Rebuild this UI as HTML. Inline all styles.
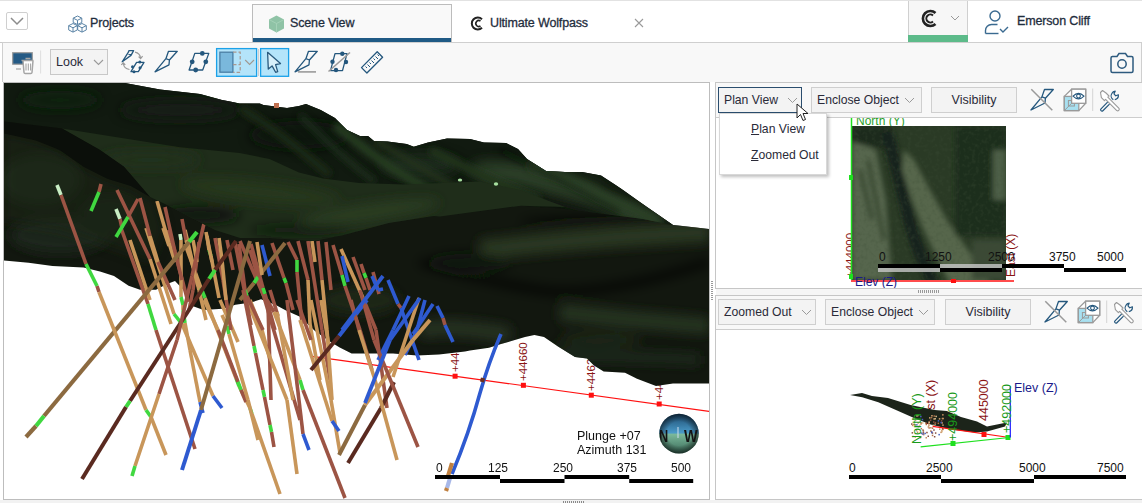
<!DOCTYPE html>
<html><head><meta charset="utf-8">
<style>
*{box-sizing:border-box;margin:0;padding:0}
html,body{width:1142px;height:503px;overflow:hidden;background:#fff;font-family:"Liberation Sans",sans-serif;color:#333}
.abs{position:absolute}
#top{position:absolute;left:0;top:0;width:1142px;height:43px;background:#fff;border-top:1px solid #e2e2e2;border-bottom:1px solid #c9c9c9}
.tabtxt{position:absolute;font-size:12.5px;color:#1f2d3d;top:15px;letter-spacing:-0.15px;-webkit-text-stroke:0.3px #1f2d3d}
#tb{position:absolute;left:2px;top:42px;width:1140px;height:40px;background:#f8f8f8;border:1px solid #cfcfcf;border-bottom:none}
#vp{position:absolute;left:3px;top:82px;width:707px;height:418px;border:1px solid #bdbdbd;background:#fff;overflow:hidden}
.sel{position:absolute;background:#f3f3f3;border:1px solid #cfcfcf;font-size:12.2px;color:#2a2a38}
.btn{position:absolute;background:#f3f3f3;border:1px solid #cfcfcf;font-size:12.5px;color:#2a2a38;text-align:center}
.chev{position:absolute;width:7px;height:7px;border-right:1px solid #9a9a9a;border-bottom:1px solid #9a9a9a;transform:rotate(45deg)}
</style></head><body>
<div id="top">
  <!-- dropdown toggle -->
  <div class="abs" style="left:6px;top:11px;width:22px;height:18px;border:1px solid #cfcfcf;border-radius:2px;background:#fff"></div>
  <svg class="abs" style="left:9px;top:15px" width="16" height="10"><polyline points="2,2 8,8 14,2" fill="none" stroke="#8c8c8c" stroke-width="1.5"/></svg>
  <!-- projects -->
  <svg class="abs" style="left:67.5px;top:14px" width="19" height="19" viewBox="0 0 19 19"><path d="M9.50 1.00 L13.80 3.15 L13.80 7.45 L9.50 9.60 L5.20 7.45 L5.20 3.15Z M5.20 3.15 L9.50 5.30 L13.80 3.15 M9.50 5.30 L9.50 9.60 M5.00 8.50 L9.30 10.65 L9.30 14.95 L5.00 17.10 L0.70 14.95 L0.70 10.65Z M0.70 10.65 L5.00 12.80 L9.30 10.65 M5.00 12.80 L5.00 17.10 M14.00 8.50 L18.30 10.65 L18.30 14.95 L14.00 17.10 L9.70 14.95 L9.70 10.65Z M9.70 10.65 L14.00 12.80 L18.30 10.65 M14.00 12.80 L14.00 17.10" fill="#fff" stroke="#5b84a6" stroke-width="1" stroke-linejoin="round"/></svg>
  <div class="tabtxt" style="left:90px">Projects</div>
  <!-- scene view tab -->
  <div class="abs" style="left:252px;top:3px;width:200px;height:39px;background:#f9f9f9;border:1px solid #bcbcbc;border-bottom:none"></div>
  <div class="abs" style="left:253px;top:37px;width:198px;height:4px;background:#1f5a85"></div>
  <svg class="abs" style="left:268px;top:14px" width="17" height="18" viewBox="0 0 17 18"><path d="M8.5 0.5L16 4.5v9L8.5 17.5 1 13.5v-9z" fill="#8fc3a6"/><path d="M1 4.5l7.5 4 7.5-4M8.5 8.5v9" stroke="#a9d4bb" stroke-width="0.8" fill="none"/></svg>
  <div class="tabtxt" style="left:290px">Scene View</div>
  <!-- ultimate wolfpass -->
  <svg class="abs" style="left:470px;top:15px" width="15" height="15" viewBox="0 0 15 15"><path d="M12 3.2A6 6 0 1 0 12 11.8" fill="none" stroke="#222" stroke-width="2"/><path d="M10.5 5A3 3 0 1 0 10.5 10" fill="none" stroke="#222" stroke-width="1.6"/></svg>
  <div class="tabtxt" style="left:490px">Ultimate Wolfpass</div>
  <svg class="abs" style="left:634px;top:17px" width="10" height="10"><path d="M1 1L9 9M9 1L1 9" stroke="#9a9a9a" stroke-width="1.1"/></svg>
  <!-- logo box -->
  <div class="abs" style="left:908px;top:0px;width:60px;height:42px;background:#f7f7f7;border-left:1px solid #d0d0d0;border-right:1px solid #d0d0d0"></div>
  <div class="abs" style="left:908px;top:34px;width:60px;height:8px;background:#5dbb8a"></div>
  <svg class="abs" style="left:920px;top:8px" width="19" height="19" viewBox="0 0 19 19"><path d="M15.5 4A7.5 7.5 0 1 0 15.5 15" fill="none" stroke="#222" stroke-width="2.6"/><path d="M13 6.5A4 4 0 1 0 13 12.5" fill="none" stroke="#222" stroke-width="2"/></svg>
  <svg class="abs" style="left:950px;top:14px" width="10" height="7"><polyline points="1,1 5,5 9,1" fill="none" stroke="#9a9a9a" stroke-width="1"/></svg>
  <!-- user -->
  <svg class="abs" style="left:984px;top:8px" width="26" height="26" viewBox="0 0 26 26" fill="none" stroke="#3a6a90" stroke-width="1.4"><circle cx="11" cy="7" r="5"/><path d="M1.5 24.5v-3a6 6 0 0 1 6-6h6"/><path d="M1.5 24.5h13"/><path d="M16 20l3 3 5-5"/></svg>
  <div class="tabtxt" style="left:1017px;top:13px">Emerson Cliff</div>
</div>
<div id="tb"></div>
<svg class="abs" style="left:0;top:42px" width="1142" height="40" viewBox="0 42 1142 40">
 <!-- monitor trash -->
 <rect x="12.7" y="52.7" width="19.6" height="11.5" fill="#245a85" stroke="#9a9a9a" stroke-width="1.2"/>
 <line x1="16" y1="69" x2="21" y2="69" stroke="#aaa" stroke-width="1.3"/>
 <path d="M21.5 60.5h12 M23 60.8l1 11.7a1.2 1.2 0 0 0 1.2 1h5.6a1.2 1.2 0 0 0 1.2-1l1-11.7 M25.5 58.5h5" fill="#fff" stroke="#a5a5a5" stroke-width="1.5"/>
 <path d="M26 63.5v7 M28.3 63.5v7 M30.6 63.5v7" stroke="#a5a5a5" stroke-width="1.1"/>
 <line x1="40.6" y1="50.5" x2="40.6" y2="73.5" stroke="#dedede" stroke-width="1"/>
 <!-- Look select -->
 <rect x="50.5" y="49.5" width="57" height="25" fill="#f3f3f3" stroke="#c8c8c8"/>
 <polyline points="94,60 98.5,64.5 103,60" fill="none" stroke="#9a9a9a" stroke-width="1.1"/>
 <g fill="none" stroke="#24577d" stroke-width="1.3" stroke-linejoin="round">
  <!-- rotate icon -->
  <path d="M129 50.6h4.6l-2.6 4.8-8.8 6.4 6.2-9.6z M127.5 53.3l3.6 1.6"/>
  <path d="M131 71.7l5.6-9.4h7.4l-5.7 9.4z"/>
  <!-- knife -->
  <path d="M168.5 51.3h8.8l-7.9 8.7-0.4 4.8-14 7 10.9-13.1z M165.9 58.7l3.5 1.3"/>
  <!-- parallelogram -->
  <path d="M194.8 53.4h14l-6.1 16.6h-13.6z"/>
  <!-- knife w/ line -->
  <path d="M308.5 51.3h8.8l-7.9 8.7-0.4 4.8-14 7 10.9-13.1z M305.9 58.7l3.5 1.3"/>
  <!-- slashed polygon -->
  <path d="M335 53.6h12l-4.5 17h-12z" />
  <!-- ruler -->
  <path d="M361.5 67.6l15.7-15.8 5.4 5.4-15.7 15.8z"/>
  <path d="M365.5 66.5l1.5 1.5 M367.5 64.5l2.5 2.5 M369.5 62.5l1.5 1.5 M371.5 60.5l2.5 2.5 M373.5 58.5l1.5 1.5 M375.5 56.5l2.5 2.5 M377.5 54.5l1.5 1.5" stroke-width="1"/>
 </g>
 <g fill="none" stroke="#9a9a9a" stroke-width="1.2">
  <path d="M135 52.2a7 7 0 0 1 5.6 6 M138.6 56.6l2 2 2-2.4"/>
  <path d="M129.5 69.5a7 7 0 0 1-6.2-6.2 M121.3 64.8l2-2 2 2"/>
  <line x1="298" y1="71.9" x2="316" y2="71.9" stroke-width="1.6"/>
 </g>
 <g fill="#24577d">
  <circle cx="132.5" cy="66.8" r="1.5"/><circle cx="139.8" cy="62.1" r="1.5"/><circle cx="140" cy="67.7" r="1.5"/><circle cx="134" cy="71.7" r="1.5"/>
  <circle cx="202.3" cy="53.4" r="2.4"/><circle cx="192.2" cy="61.8" r="2.4"/><circle cx="205.8" cy="61.8" r="2.4"/><circle cx="195.7" cy="70" r="2.4"/>
  <circle cx="342.3" cy="53.8" r="2.2"/><circle cx="332.5" cy="61.7" r="2.2"/><circle cx="346" cy="62" r="2.2"/><circle cx="336" cy="70" r="2.2"/>
 </g>
 <line x1="328.5" y1="71.5" x2="350" y2="52.5" stroke="#9a9a9a" stroke-width="1.6"/>
 <!-- selected buttons -->
 <rect x="216.6" y="48.6" width="40" height="27.7" fill="#b4e4fa" stroke="#1ba1e8" stroke-width="1.3"/>
 <rect x="219.9" y="52.2" width="13" height="20" fill="#7ab8dc" stroke="#4a7ea4" stroke-width="1.3"/>
 <path d="M233 52.2h7.2v20.2h-7.2 M233 64.6h7.2" fill="none" stroke="#a89890" stroke-width="1.2" stroke-dasharray="3.5 2"/>
 <polyline points="245.2,60 249.6,64.4 254,60" fill="none" stroke="#a09890" stroke-width="1.1"/>
 <line x1="258.5" y1="49" x2="258.5" y2="76" stroke="#d0d0d0" stroke-width="1"/>
 <rect x="260.6" y="48.6" width="28" height="27.7" fill="#b4e4fa" stroke="#1ba1e8" stroke-width="1.3"/>
 <path d="M267.6 52.3l12.9 11.2-4.9 1.1 2.1 7-2.1.7-3.5-6.4-3.8 3.2z" fill="#d8f0fa" stroke="#2a5a7e" stroke-width="1.3" stroke-linejoin="round"/>
 <!-- camera -->
 <path d="M1112 56.5h5l2-3h6.5l2 3h4a1.5 1.5 0 0 1 1.5 1.5v13a1.5 1.5 0 0 1-1.5 1.5h-19a1.5 1.5 0 0 1-1.5-1.5v-13a1.5 1.5 0 0 1 1.5-1.5z" fill="none" stroke="#2d5a7e" stroke-width="1.5"/>
 <circle cx="1122" cy="64" r="4.2" fill="none" stroke="#2d5a7e" stroke-width="1.5"/>
</svg>
<div class="abs" style="left:56px;top:54.5px;font-size:12.5px;color:#2a2a3a">Look</div>

<div id="vp"></div>
<svg class="abs" style="left:0;top:0" width="1142" height="503" viewBox="0 0 1142 503"><defs><clipPath id="vpc"><rect x="4" y="83" width="705" height="416"/></clipPath></defs><g clip-path="url(#vpc)">
<line x1="312" y1="356.4" x2="712" y2="411.7" stroke="#ff1010" stroke-width="1.2"/>
<rect x="452.6" y="373.7" width="5" height="5" fill="#ff1010"/>
<rect x="520.9" y="382.8" width="5" height="5" fill="#ff1010"/>
<rect x="588.8" y="392.7" width="5" height="5" fill="#ff1010"/>
<rect x="656.7" y="401.5" width="5" height="5" fill="#ff1010"/>
<text x="459" y="372" transform="rotate(-90 459 372)" font-family="Liberation Sans" font-size="11.5" fill="#8a1414">+44700</text>
<text x="526.5" y="381" transform="rotate(-90 526.5 381)" font-family="Liberation Sans" font-size="11.5" fill="#8a1414">+44660</text>
<text x="595" y="391" transform="rotate(-90 595 391)" font-family="Liberation Sans" font-size="11.5" fill="#8a1414">+44620</text>
<text x="663" y="400" transform="rotate(-90 663 400)" font-family="Liberation Sans" font-size="11.5" fill="#8a1414">+44580</text>
<defs><filter id="b6" x="-50%" y="-50%" width="200%" height="200%"><feGaussianBlur stdDeviation="6"/></filter><filter id="b3" x="-50%" y="-50%" width="200%" height="200%"><feGaussianBlur stdDeviation="3"/></filter>
<clipPath id="tclip"><polygon points="4,83 125,83 160,89.5 200,94 222,100 230,101.5 239.5,103.4 259.8,103.4 263.4,105 287,108 299,106 306,104 320.7,110 335,118 347,130 360,136 368,136 374,141 387.5,141.6 406.6,144 413.8,146.8 428,142.5 447,138.5 470,139 484,142.5 506,143 518,149 527,159 546,171 565,172 582,172 601,175.5 615.6,185 623,190 637,200 646.6,206.7 673,225 709,229 709,383.5 673,383.5 656,386 637,378.8 625,372.8 603.7,371.6 594,365.6 587,358.5 575,357 558,346.5 544,337 534.4,335 525,337 501,344 489,347.7 470,350.6 465,351.6 439,354.5 417,355.5 393,353.6 351.6,353.6 339.7,347.6 329.8,341.6 315,331 300,316.8 286,310.4 276.7,305.6 261,299.3 251,302.5 235.4,304.8 222.7,308.8 203.6,310 191,305.6 184.5,291 175,281 167,284 156,289.7 140,289.7 128.6,285.8 114,276 100,271.5 83.5,267.6 52.5,266 28.6,262.8 4,260.4"/></clipPath><clipPath id="sclip"><polygon points="4,83 125,83 160,89.5 200,94 222,100 230,101.5 239.5,103.4 259.8,103.4 263.4,105 287,108 299,106 306,104 320.7,110 335,118 347,130 360,136 368,136 374,141 387.5,141.6 406.6,144 413.8,146.8 428,142.5 447,138.5 470,139 484,142.5 506,143 518,149 527,159 546,171 565,172 582,172 601,175.5 615.6,185 623,190 637,200 646.6,206.7 673,225 709,229 709,229 669.8,224.6 642.8,219 602,213.8 561.7,208.4 521,205.7 480.5,211 440,216.5 433.5,216 388.8,223 344,235 314,241 269.5,238 240,238 215,230 190,217 165,204 150,197 124,166.8 100,150 62,128.6 4.3,121.5"/></clipPath><clipPath id="mclip"><polygon points="62,128.6 180,147.3 239.6,153 269.5,159 299,172.6 323,178.6 359,183 403.7,184.6 480,181.6 520,190 565,207 521,205.7 480.5,211 440,216.5 433.5,216 388.8,223 344,235 314,241 269.5,238 240,238 215,230 190,217 165,204 150,197 124,166.8 100,150"/></clipPath></defs>
<polygon points="4,83 125,83 160,89.5 200,94 222,100 230,101.5 239.5,103.4 259.8,103.4 263.4,105 287,108 299,106 306,104 320.7,110 335,118 347,130 360,136 368,136 374,141 387.5,141.6 406.6,144 413.8,146.8 428,142.5 447,138.5 470,139 484,142.5 506,143 518,149 527,159 546,171 565,172 582,172 601,175.5 615.6,185 623,190 637,200 646.6,206.7 673,225 709,229 709,383.5 673,383.5 656,386 637,378.8 625,372.8 603.7,371.6 594,365.6 587,358.5 575,357 558,346.5 544,337 534.4,335 525,337 501,344 489,347.7 470,350.6 465,351.6 439,354.5 417,355.5 393,353.6 351.6,353.6 339.7,347.6 329.8,341.6 315,331 300,316.8 286,310.4 276.7,305.6 261,299.3 251,302.5 235.4,304.8 222.7,308.8 203.6,310 191,305.6 184.5,291 175,281 167,284 156,289.7 140,289.7 128.6,285.8 114,276 100,271.5 83.5,267.6 52.5,266 28.6,262.8 4,260.4" fill="#12170f"/>
<g clip-path="url(#tclip)" filter="url(#b6)"><path d="M480,250 C560,240 650,235 709,232" stroke="#2a3823" stroke-width="20" fill="none"/><path d="M560,312 C610,318 660,322 709,326" stroke="#283420" stroke-width="16" fill="none"/><path d="M520,350 C580,360 640,355 700,360" stroke="#1f2a1b" stroke-width="10" fill="none"/><path d="M420,330 C450,325 480,330 510,335" stroke="#263320" stroke-width="16" fill="none"/><path d="M420,262 C480,280 540,292 563,292 C620,290 670,275 709,262" stroke="#080a07" stroke-width="6" fill="none"/><ellipse cx="600" cy="340" rx="40" ry="8" fill="#1c2519"/><ellipse cx="470" cy="262" rx="40" ry="8" fill="#10150e"/><ellipse cx="360" cy="300" rx="40" ry="15" fill="#1c2618"/><ellipse cx="600" cy="222" rx="80" ry="4" fill="#0c0f0a"/><ellipse cx="40" cy="180" rx="40" ry="25" fill="#1a2a1a"/><ellipse cx="60" cy="235" rx="50" ry="18" fill="#1a281a"/><ellipse cx="110" cy="215" rx="30" ry="20" fill="#152015"/></g>
<polygon points="4,133 36,140 60,150 84,167 107,179 131,186 155,200 165,230 150,262 120,250 60,230 4,222" fill="#1a2819" opacity="0.6" filter="url(#b6)"/>
<g stroke-linecap="butt"><line x1="121" y1="228" x2="148" y2="304" stroke="#9c5444" stroke-width="3.6"/><line x1="148" y1="304" x2="156" y2="330" stroke="#40d840" stroke-width="3.6"/><line x1="156" y1="330" x2="195" y2="449" stroke="#9c5444" stroke-width="3.6"/><line x1="116" y1="209" x2="120" y2="219" stroke="#c8eec4" stroke-width="3.6"/><line x1="120" y1="219" x2="122" y2="228" stroke="#9c5444" stroke-width="3.6"/><line x1="117" y1="190" x2="150" y2="259" stroke="#9c5444" stroke-width="3.6"/><line x1="150" y1="259" x2="171" y2="324" stroke="#c8965a" stroke-width="3.6"/><line x1="146" y1="228" x2="174" y2="314" stroke="#c8965a" stroke-width="3.6"/><line x1="174" y1="314" x2="182" y2="324" stroke="#40d840" stroke-width="3.6"/><line x1="182" y1="324" x2="213" y2="396" stroke="#c8965a" stroke-width="3.6"/><line x1="213" y1="396" x2="222" y2="408" stroke="#2e5ad0" stroke-width="3.6"/><line x1="168" y1="230" x2="175" y2="252" stroke="#9c5444" stroke-width="3.6"/><line x1="175" y1="252" x2="188" y2="302" stroke="#9c5444" stroke-width="3.6"/><line x1="185" y1="230" x2="199" y2="290" stroke="#c8965a" stroke-width="3.6"/><line x1="199" y1="290" x2="206" y2="320" stroke="#c8965a" stroke-width="3.6"/><line x1="180" y1="234" x2="181" y2="240" stroke="#c8eec4" stroke-width="3.6"/><line x1="181" y1="240" x2="181" y2="297" stroke="#c8965a" stroke-width="3.6"/><line x1="181" y1="297" x2="183" y2="305" stroke="#40d840" stroke-width="3.6"/><line x1="183" y1="305" x2="183" y2="310" stroke="#c8965a" stroke-width="3.6"/><line x1="183" y1="310" x2="185" y2="323" stroke="#40d840" stroke-width="3.6"/><line x1="185" y1="323" x2="190" y2="350" stroke="#c8965a" stroke-width="3.6"/><line x1="190" y1="350" x2="200" y2="402" stroke="#c8965a" stroke-width="3.6"/><line x1="200" y1="402" x2="203" y2="413" stroke="#2e5ad0" stroke-width="3.6"/><line x1="185" y1="244" x2="201" y2="288" stroke="#c8965a" stroke-width="3.6"/><line x1="201" y1="288" x2="205" y2="298" stroke="#40d840" stroke-width="3.6"/><line x1="205" y1="298" x2="236" y2="378" stroke="#c8965a" stroke-width="3.6"/><line x1="236" y1="378" x2="239" y2="386" stroke="#40d840" stroke-width="3.6"/><line x1="239" y1="386" x2="250" y2="408" stroke="#c8965a" stroke-width="3.6"/><line x1="250" y1="408" x2="252" y2="414" stroke="#40d840" stroke-width="3.6"/><line x1="252" y1="414" x2="280" y2="494" stroke="#c8965a" stroke-width="3.6"/><line x1="204" y1="300" x2="218" y2="330" stroke="#c8965a" stroke-width="3.6"/><line x1="218" y1="330" x2="238" y2="382" stroke="#9c5444" stroke-width="3.6"/><line x1="238" y1="382" x2="241" y2="390" stroke="#40d840" stroke-width="3.6"/><line x1="241" y1="390" x2="246" y2="402" stroke="#9c5444" stroke-width="3.6"/><line x1="222" y1="315" x2="227" y2="326" stroke="#c8965a" stroke-width="3.6"/><line x1="227" y1="326" x2="229" y2="334" stroke="#40d840" stroke-width="3.6"/><line x1="229" y1="334" x2="248" y2="400" stroke="#c8965a" stroke-width="3.6"/><line x1="248" y1="400" x2="258" y2="440" stroke="#c8965a" stroke-width="3.6"/><line x1="220" y1="300" x2="238" y2="342" stroke="#c8965a" stroke-width="3.6"/><line x1="250" y1="250" x2="262" y2="291" stroke="#9c5444" stroke-width="3.6"/><line x1="262" y1="291" x2="264" y2="297" stroke="#40d840" stroke-width="3.6"/><line x1="264" y1="297" x2="300" y2="420" stroke="#9c5444" stroke-width="3.6"/><line x1="250" y1="300" x2="262" y2="330" stroke="#c8965a" stroke-width="3.6"/><line x1="262" y1="330" x2="270" y2="360" stroke="#c8965a" stroke-width="3.6"/><line x1="270" y1="290" x2="278" y2="316" stroke="#9c5444" stroke-width="3.6"/><line x1="262" y1="245" x2="270" y2="276" stroke="#2e5ad0" stroke-width="3.6"/><line x1="272" y1="243" x2="284" y2="278" stroke="#9c5444" stroke-width="3.6"/><line x1="284" y1="278" x2="286" y2="283" stroke="#40d840" stroke-width="3.6"/><line x1="286" y1="283" x2="293" y2="310" stroke="#9c5444" stroke-width="3.6"/><line x1="288" y1="242" x2="297" y2="260" stroke="#9c5444" stroke-width="3.6"/><line x1="297" y1="260" x2="297" y2="272" stroke="#40d840" stroke-width="3.6"/><line x1="297" y1="272" x2="302" y2="324" stroke="#9c5444" stroke-width="3.6"/><line x1="298" y1="241" x2="308" y2="280" stroke="#9c5444" stroke-width="3.6"/><line x1="308" y1="280" x2="310" y2="324" stroke="#c8965a" stroke-width="3.6"/><line x1="310" y1="324" x2="320" y2="380" stroke="#c8965a" stroke-width="3.6"/><line x1="308" y1="241" x2="322" y2="330" stroke="#9c5444" stroke-width="3.6"/><line x1="322" y1="330" x2="330" y2="380" stroke="#9c5444" stroke-width="3.6"/><line x1="318" y1="241" x2="322" y2="280" stroke="#9c5444" stroke-width="3.6"/><line x1="322" y1="280" x2="327" y2="330" stroke="#c8965a" stroke-width="3.6"/><line x1="327" y1="330" x2="332" y2="400" stroke="#c8965a" stroke-width="3.6"/><line x1="240" y1="241" x2="268" y2="306" stroke="#9c5444" stroke-width="3.6"/><line x1="268" y1="306" x2="271" y2="400" stroke="#9c5444" stroke-width="3.6"/><line x1="243" y1="290" x2="254" y2="346" stroke="#9c5444" stroke-width="3.6"/><line x1="254" y1="346" x2="255.5" y2="353" stroke="#40d840" stroke-width="3.6"/><line x1="255.5" y1="353" x2="263" y2="390" stroke="#9c5444" stroke-width="3.6"/><line x1="263" y1="390" x2="264.5" y2="397" stroke="#40d840" stroke-width="3.6"/><line x1="264.5" y1="397" x2="270" y2="425" stroke="#9c5444" stroke-width="3.6"/><line x1="270" y1="425" x2="271.5" y2="432" stroke="#40d840" stroke-width="3.6"/><line x1="271.5" y1="432" x2="274" y2="447" stroke="#9c5444" stroke-width="3.6"/><line x1="247" y1="300" x2="287" y2="400" stroke="#c8965a" stroke-width="3.6"/><line x1="287" y1="400" x2="297" y2="474" stroke="#c8965a" stroke-width="3.6"/><line x1="277" y1="312" x2="293" y2="400" stroke="#c8965a" stroke-width="3.6"/><line x1="267" y1="300" x2="274" y2="312" stroke="#9c5444" stroke-width="3.6"/><line x1="274" y1="312" x2="300" y2="380" stroke="#c8965a" stroke-width="3.6"/><line x1="300" y1="380" x2="303" y2="390" stroke="#40d840" stroke-width="3.6"/><line x1="303" y1="390" x2="345" y2="498" stroke="#9c5444" stroke-width="3.6"/><line x1="287" y1="300" x2="303" y2="434" stroke="#9c5444" stroke-width="3.6"/><line x1="303" y1="434" x2="309" y2="450" stroke="#2e5ad0" stroke-width="3.6"/><line x1="297" y1="300" x2="311" y2="340" stroke="#9c5444" stroke-width="3.6"/><line x1="311" y1="300" x2="331" y2="400" stroke="#c8965a" stroke-width="3.6"/><line x1="331" y1="400" x2="340" y2="453" stroke="#c8965a" stroke-width="3.6"/><line x1="321" y1="300" x2="329" y2="346" stroke="#c8965a" stroke-width="3.6"/><line x1="300" y1="320" x2="332" y2="421" stroke="#c8965a" stroke-width="3.6"/><line x1="332" y1="421" x2="339" y2="431" stroke="#2e5ad0" stroke-width="3.6"/><line x1="285" y1="243" x2="258" y2="277" stroke="#8c6a40" stroke-width="4"/><line x1="258" y1="277" x2="254" y2="283" stroke="#40d840" stroke-width="4"/><line x1="254" y1="283" x2="240" y2="300" stroke="#8c6a40" stroke-width="4"/><line x1="130" y1="240" x2="150" y2="300" stroke="#c8965a" stroke-width="3.6"/><line x1="138" y1="199" x2="128" y2="217" stroke="#9c5444" stroke-width="3.6"/><line x1="128" y1="217" x2="116" y2="237" stroke="#40d840" stroke-width="3.6"/><line x1="101" y1="184" x2="99" y2="192" stroke="#9c5444" stroke-width="3.6"/><line x1="99" y1="192" x2="91" y2="211" stroke="#40d840" stroke-width="3.6"/><line x1="333" y1="245" x2="342" y2="275" stroke="#9c5444" stroke-width="3.6"/><line x1="342" y1="275" x2="345" y2="286" stroke="#40d840" stroke-width="3.6"/><line x1="345" y1="286" x2="360" y2="330" stroke="#9c5444" stroke-width="3.6"/><line x1="360" y1="330" x2="372" y2="370" stroke="#9c5444" stroke-width="3.6"/><line x1="341" y1="249" x2="363" y2="298" stroke="#c8965a" stroke-width="3.6"/><line x1="363" y1="298" x2="376" y2="330" stroke="#9c5444" stroke-width="3.6"/><line x1="376" y1="330" x2="387" y2="408" stroke="#9c5444" stroke-width="3.6"/><line x1="342" y1="256" x2="348" y2="282" stroke="#2e5ad0" stroke-width="3.6"/><line x1="353" y1="257" x2="365" y2="290" stroke="#9c5444" stroke-width="3.6"/><line x1="361" y1="264" x2="364" y2="273" stroke="#9c5444" stroke-width="3.6"/><line x1="364" y1="273" x2="366" y2="278" stroke="#40d840" stroke-width="3.6"/><line x1="366" y1="278" x2="370" y2="290" stroke="#9c5444" stroke-width="3.6"/><line x1="373" y1="272" x2="379" y2="294" stroke="#9c5444" stroke-width="3.6"/><line x1="372" y1="276" x2="378" y2="290" stroke="#2e5ad0" stroke-width="3.6"/><line x1="378" y1="290" x2="383" y2="289" stroke="#2e5ad0" stroke-width="3.6"/><line x1="388" y1="280" x2="398" y2="304" stroke="#2e5ad0" stroke-width="3.6"/><line x1="398" y1="304" x2="401" y2="308" stroke="#9c5444" stroke-width="3.6"/><line x1="401" y1="308" x2="419" y2="360" stroke="#2e5ad0" stroke-width="3.6"/><line x1="409" y1="296" x2="393" y2="330" stroke="#2e5ad0" stroke-width="3.6"/><line x1="393" y1="330" x2="378" y2="360" stroke="#2e5ad0" stroke-width="3.6"/><line x1="419" y1="298" x2="393" y2="377" stroke="#c8965a" stroke-width="3.6"/><line x1="425" y1="300" x2="417" y2="330" stroke="#2e5ad0" stroke-width="3.6"/><line x1="417" y1="330" x2="405" y2="355" stroke="#2e5ad0" stroke-width="3.6"/><line x1="433" y1="304" x2="413" y2="334" stroke="#2e5ad0" stroke-width="3.6"/><line x1="437" y1="306" x2="443" y2="318" stroke="#2e5ad0" stroke-width="3.6"/><line x1="443" y1="318" x2="445" y2="325" stroke="#9c5444" stroke-width="3.6"/><line x1="445" y1="325" x2="453" y2="342" stroke="#2e5ad0" stroke-width="3.6"/><line x1="163" y1="228" x2="169" y2="246" stroke="#c8965a" stroke-width="3.6"/><line x1="199" y1="242" x2="193" y2="290" stroke="#9c5444" stroke-width="3.6"/><line x1="193" y1="290" x2="189" y2="310" stroke="#9c5444" stroke-width="3.6"/><line x1="215" y1="238" x2="223" y2="280" stroke="#9c5444" stroke-width="3.6"/><line x1="223" y1="280" x2="231" y2="330" stroke="#9c5444" stroke-width="3.6"/><line x1="219" y1="238" x2="222" y2="260" stroke="#c8965a" stroke-width="3.6"/><line x1="222" y1="260" x2="226" y2="300" stroke="#c8965a" stroke-width="3.6"/><line x1="207" y1="236" x2="209" y2="250" stroke="#c8965a" stroke-width="3.6"/><line x1="209" y1="250" x2="211" y2="256" stroke="#40d840" stroke-width="3.6"/><line x1="211" y1="256" x2="219" y2="298" stroke="#c8965a" stroke-width="3.6"/><line x1="239" y1="244" x2="245" y2="290" stroke="#9c5444" stroke-width="3.6"/><line x1="245" y1="290" x2="247" y2="296" stroke="#40d840" stroke-width="3.6"/><line x1="247" y1="296" x2="263" y2="330" stroke="#9c5444" stroke-width="3.6"/><line x1="235" y1="242" x2="251" y2="325" stroke="#9c5444" stroke-width="3.6"/><line x1="251" y1="244" x2="263" y2="288" stroke="#9c5444" stroke-width="3.6"/><line x1="263" y1="288" x2="265" y2="294" stroke="#40d840" stroke-width="3.6"/><line x1="265" y1="294" x2="275" y2="330" stroke="#9c5444" stroke-width="3.6"/><line x1="193" y1="240" x2="197" y2="262" stroke="#c8965a" stroke-width="3.6"/><line x1="227" y1="240" x2="233" y2="270" stroke="#9c5444" stroke-width="3.6"/><line x1="257" y1="242" x2="262" y2="275" stroke="#c8965a" stroke-width="3.6"/><line x1="312" y1="241" x2="315" y2="262" stroke="#c8965a" stroke-width="3.6"/><line x1="326" y1="242" x2="331" y2="290" stroke="#9c5444" stroke-width="3.6"/><line x1="140" y1="198" x2="150" y2="236" stroke="#9c5444" stroke-width="3.6"/><line x1="150" y1="236" x2="158" y2="262" stroke="#c8965a" stroke-width="3.6"/><line x1="158" y1="262" x2="175" y2="300" stroke="#9c5444" stroke-width="3.6"/><line x1="157" y1="201" x2="169" y2="243" stroke="#c8965a" stroke-width="3.6"/><line x1="169" y1="243" x2="175" y2="262" stroke="#c8965a" stroke-width="3.6"/><line x1="165" y1="207" x2="175" y2="252" stroke="#9c5444" stroke-width="3.6"/><line x1="175" y1="252" x2="182" y2="280" stroke="#9c5444" stroke-width="3.6"/><line x1="182" y1="219" x2="186" y2="240" stroke="#9c5444" stroke-width="3.6"/><line x1="186" y1="240" x2="198" y2="286" stroke="#c8965a" stroke-width="3.6"/><line x1="206" y1="232" x2="212" y2="262" stroke="#c8965a" stroke-width="3.6"/><line x1="197" y1="232" x2="189" y2="242" stroke="#40d840" stroke-width="4.2"/><line x1="189" y1="242" x2="44" y2="416" stroke="#8c6a40" stroke-width="4.2"/><line x1="44" y1="416" x2="36" y2="426" stroke="#40d840" stroke-width="4.2"/><line x1="36" y1="426" x2="26" y2="437" stroke="#8c6a40" stroke-width="4.2"/><line x1="57" y1="185" x2="61" y2="195" stroke="#c8eec4" stroke-width="3.6"/><line x1="61" y1="195" x2="86" y2="264" stroke="#9c5444" stroke-width="3.6"/><line x1="86" y1="264" x2="97" y2="286" stroke="#40d840" stroke-width="3.6"/><line x1="97" y1="286" x2="99" y2="292" stroke="#9c5444" stroke-width="3.6"/><line x1="99" y1="292" x2="146" y2="410" stroke="#c8965a" stroke-width="3.6"/><line x1="146" y1="410" x2="151" y2="417" stroke="#40d840" stroke-width="3.6"/><line x1="151" y1="417" x2="166" y2="455" stroke="#c8965a" stroke-width="3.6"/><line x1="236" y1="241" x2="215" y2="270" stroke="#5a2a20" stroke-width="4"/><line x1="215" y1="270" x2="209" y2="279" stroke="#40d840" stroke-width="4"/><line x1="209" y1="279" x2="130" y2="401" stroke="#5a2a20" stroke-width="4"/><line x1="130" y1="401" x2="126" y2="407" stroke="#40d840" stroke-width="4"/><line x1="126" y1="407" x2="82" y2="479" stroke="#5a2a20" stroke-width="4"/><line x1="208" y1="206" x2="192" y2="276" stroke="#9c5444" stroke-width="3.6"/><line x1="192" y1="276" x2="177" y2="340" stroke="#9c5444" stroke-width="3.6"/><line x1="177" y1="340" x2="159" y2="394" stroke="#9c5444" stroke-width="3.6"/><line x1="159" y1="394" x2="135" y2="466" stroke="#c8965a" stroke-width="3.6"/><line x1="135" y1="466" x2="132" y2="476" stroke="#40d840" stroke-width="3.6"/><line x1="250" y1="241" x2="201" y2="410" stroke="#8c6a40" stroke-width="4"/><line x1="201" y1="410" x2="182" y2="470" stroke="#2e5ad0" stroke-width="4"/><line x1="430" y1="320" x2="413" y2="340" stroke="#c8965a" stroke-width="4"/><line x1="413" y1="340" x2="365" y2="405" stroke="#c8965a" stroke-width="4"/><line x1="365" y1="405" x2="339" y2="455" stroke="#8c6a40" stroke-width="4"/><line x1="367" y1="300" x2="339" y2="336" stroke="#2e5ad0" stroke-width="4"/><line x1="339" y1="336" x2="311" y2="370" stroke="#5a2a20" stroke-width="4"/><line x1="394" y1="382" x2="381" y2="408" stroke="#5a2a20" stroke-width="4"/><line x1="381" y1="408" x2="348" y2="463" stroke="#5a2a20" stroke-width="4"/><line x1="351" y1="300" x2="359" y2="330" stroke="#9c5444" stroke-width="3.6"/><line x1="359" y1="330" x2="375" y2="380" stroke="#c8965a" stroke-width="3.6"/><line x1="375" y1="380" x2="397" y2="460" stroke="#c8965a" stroke-width="3.6"/><line x1="360" y1="290" x2="374" y2="340" stroke="#9c5444" stroke-width="3.6"/><line x1="374" y1="340" x2="418" y2="447" stroke="#9c5444" stroke-width="3.6"/><line x1="420" y1="298" x2="390" y2="340" stroke="#2e5ad0" stroke-width="3.8"/><line x1="390" y1="340" x2="365" y2="403" stroke="#2e5ad0" stroke-width="3.8"/><line x1="383" y1="276" x2="342" y2="330" stroke="#2e5ad0" stroke-width="3.8"/></g>
<polygon points="4,83 125,83 160,89.5 200,94 222,100 230,101.5 239.5,103.4 259.8,103.4 263.4,105 287,108 299,106 306,104 320.7,110 335,118 347,130 360,136 368,136 374,141 387.5,141.6 406.6,144 413.8,146.8 428,142.5 447,138.5 470,139 484,142.5 506,143 518,149 527,159 546,171 565,172 582,172 601,175.5 615.6,185 623,190 637,200 646.6,206.7 673,225 709,229 709,229 669.8,224.6 642.8,219 602,213.8 561.7,208.4 521,205.7 480.5,211 440,216.5 433.5,216 388.8,223 344,235 314,241 269.5,238 240,238 215,230 190,217 165,204 150,197 124,166.8 100,150 62,128.6 4.3,121.5" fill="#111a10"/>
<g clip-path="url(#sclip)" filter="url(#b6)"><ellipse cx="60" cy="100" rx="40" ry="9" fill="#0c2410"/><ellipse cx="180" cy="110" rx="60" ry="10" fill="#141e12"/><ellipse cx="540" cy="178" rx="70" ry="16" fill="#2a3c25" transform="rotate(12 520 175)"/><ellipse cx="620" cy="205" rx="50" ry="11" fill="#2a3c25" transform="rotate(20 610 200)"/><ellipse cx="420" cy="165" rx="40" ry="12" fill="#1e2c1a"/><ellipse cx="300" cy="135" rx="50" ry="14" fill="#0c120a"/><ellipse cx="560" cy="200" rx="60" ry="4" fill="#080c07" transform="rotate(15 560 200)"/></g>
<g clip-path="url(#sclip)" filter="url(#b3)"><path d="M335,125 C360,145 390,170 430,190" stroke="#283c22" stroke-width="9" fill="none"/><path d="M375,140 C400,155 430,175 470,195" stroke="#22331d" stroke-width="7" fill="none"/><path d="M300,115 C320,135 345,160 375,182" stroke="#1e2d1a" stroke-width="6" fill="none"/><path d="M430,150 C460,165 500,185 540,200" stroke="#24361f" stroke-width="8" fill="none"/><path d="M530,165 C570,180 610,200 660,222" stroke="#2c4025" stroke-width="9" fill="none"/><path d="M500,150 C540,170 580,190 620,212" stroke="#0e150c" stroke-width="3" fill="none"/><path d="M240,108 C270,125 300,150 330,175" stroke="#1c2a18" stroke-width="8" fill="none"/></g>
<polygon points="62,128.6 180,147.3 239.6,153 269.5,159 299,172.6 323,178.6 359,183 403.7,184.6 480,181.6 520,190 565,207 521,205.7 480.5,211 440,216.5 433.5,216 388.8,223 344,235 314,241 269.5,238 240,238 215,230 190,217 165,204 150,197 124,166.8 100,150" fill="#1f2d1a"/>
<g clip-path="url(#mclip)" filter="url(#b6)"><ellipse cx="260" cy="192" rx="80" ry="10" fill="#27381f" transform="rotate(6 260 192)"/><ellipse cx="370" cy="212" rx="70" ry="8" fill="#2a3c22" transform="rotate(-8 370 212)"/><ellipse cx="200" cy="215" rx="40" ry="8" fill="#0e150c"/><ellipse cx="300" cy="230" rx="50" ry="4" fill="#10170e"/><ellipse cx="150" cy="160" rx="50" ry="8" fill="#24321e"/></g>
<polygon points="4.3,121.5 23.9,123.9 47.7,126.7 62,128.6 100,150 124,166.8 150,197 131,186 107.4,178.8 83.5,166.8 59.7,150 35.8,140.6 4.3,133.4" fill="#0b0f0a"/>
<ellipse cx="460" cy="180" rx="2.2" ry="1.6" fill="#a8e0a0"/><ellipse cx="496" cy="184" rx="2.2" ry="1.8" fill="#a8e0a0"/>
<rect x="274" y="103" width="5" height="5" fill="#c07050"/>
<path d="M501,334 C494,350 486,372 480,393 C474,415 462,450 452,474" fill="none" stroke="#2e5ad0" stroke-width="3.6"/>
<path d="M452,463 L448,476" stroke="#c08040" stroke-width="4.2"/>
<path d="M450,478 L447,488" stroke="#a8b8e8" stroke-width="4.2"/>
<path d="M447,488 L446,491" stroke="#c08040" stroke-width="4.2"/>
<line x1="483" y1="378" x2="482" y2="382" stroke="#6a3020" stroke-width="4.2"/>
<text x="577" y="440" font-family="Liberation Sans" font-size="12.5" fill="#111">Plunge +07</text>
<text x="577" y="454" font-family="Liberation Sans" font-size="12.5" fill="#111">Azimuth 131</text>
<g fill="#000"><rect x="435" y="475" width="65" height="4"/><rect x="500" y="479" width="64.5" height="4"/><rect x="564.5" y="475" width="64.7" height="4"/><rect x="629.2" y="479" width="64" height="4"/></g>
<g font-family="Liberation Sans" font-size="12" fill="#111"><text x="436" y="472">0</text><text x="488" y="472">125</text><text x="553" y="472">250</text><text x="617" y="472">375</text><text x="671" y="472">500</text></g>
<defs><linearGradient id="sph" x1="0" y1="0" x2="0" y2="1"><stop offset="0" stop-color="#1c4a6e"/><stop offset="0.48" stop-color="#4a9ac8"/><stop offset="0.52" stop-color="#7ab89a"/><stop offset="1" stop-color="#3a6a58"/></linearGradient><radialGradient id="sphs" cx="0.5" cy="0.5" r="0.5"><stop offset="0.6" stop-color="#000" stop-opacity="0"/><stop offset="1" stop-color="#000" stop-opacity="0.55"/></radialGradient></defs>
<circle cx="679" cy="433.6" r="19.8" fill="url(#sph)"/><circle cx="679" cy="433.6" r="19.8" fill="url(#sphs)"/>
<clipPath id="sphc"><circle cx="679" cy="433.6" r="19.5"/></clipPath><g clip-path="url(#sphc)" font-family="Liberation Sans" font-weight="bold" font-size="17" fill="#141414"><text x="0" y="0" transform="translate(659 441.5) scale(0.75 1)">N</text><text x="0" y="0" transform="translate(684 441.5) scale(0.85 1)">W</text></g>
<line x1="678" y1="427" x2="678" y2="438" stroke="#cde" stroke-width="1"/>
</g></svg>
<!-- splitter -->
<div class="abs" style="left:710px;top:82px;width:5px;height:418px;background:#fff"></div>
<div class="abs" style="left:0;top:500px;width:1142px;height:3px;background:#f2f2f2"></div>
<div class="abs" style="left:563px;top:501px;width:22px;height:2px;background:repeating-linear-gradient(90deg,#8a8a8a 0 1px,transparent 1px 2px)"></div>
<div class="abs" style="left:711px;top:281px;width:2px;height:20px;background:repeating-linear-gradient(#9a9a9a 0 1px,transparent 1px 2px)"></div>
<!-- top right panel -->
<div class="abs" style="left:715px;top:82px;width:427px;height:207px;border:1px solid #c6c6c6;border-right:none;background:#fff"></div>
<div class="abs" style="left:716px;top:83px;width:426px;height:35px;background:#f8f8f8;border-bottom:1px solid #cdcdcd"></div>
<div class="sel" style="left:718px;top:87px;width:84px;height:26px;border-color:#2a4d6e;background:#f3f3f3"><span class="abs" style="left:5px;top:5px">Plan View</span></div>
<svg class="abs" style="left:787px;top:97px" width="11" height="7"><polyline points="1,1 5.5,5.5 10,1" fill="none" stroke="#9a9a9a" stroke-width="1"/></svg>
<div class="sel" style="left:811px;top:87px;width:111px;height:26px"><span class="abs" style="left:5px;top:5px">Enclose Object</span></div>
<svg class="abs" style="left:904px;top:97px" width="11" height="7"><polyline points="1,1 5.5,5.5 10,1" fill="none" stroke="#9a9a9a" stroke-width="1"/></svg>
<div class="btn" style="left:931px;top:87px;width:86px;height:26px;line-height:24px">Visibility</div>
<svg class="abs" style="left:1026px;top:86px" width="100" height="28" viewBox="1026 86 100 28">
 <path d="M1044.5 89.5h8.8l-7.9 8.7-0.4 4.8-14 7 10.9-13.1z M1041.9 96.9l3.5 1.3" fill="none" stroke="#24577d" stroke-width="1.3" stroke-linejoin="round"/>
 <line x1="1031.3" y1="89.3" x2="1052.3" y2="110.3" stroke="#9a9a9a" stroke-width="1.5"/>
 <path d="M1064.3 96.4l7.3-7.2h14.1v14.1l-6.9 7.3h-14.5z" fill="#fff" stroke="#9a9a9a" stroke-width="1.3" stroke-linejoin="round"/>
 <rect x="1064.3" y="96.4" width="14.5" height="14.2" fill="#a8e0f0" stroke="#9a9a9a" stroke-width="1.3"/>
 <rect x="1068.4" y="100.5" width="6" height="5.5" fill="none" stroke="#9a9a9a" stroke-width="1"/>
 <line x1="1064.3" y1="110.6" x2="1071.6" y2="103.3" stroke="#9a9a9a" stroke-width="1"/>
 <rect x="1071.6" y="89.2" width="14.1" height="14.1" fill="#fff" stroke="#9a9a9a" stroke-width="1.3"/>
 <path d="M1073 96.1q5.5-5.5 11 0q-5.5 5.5-11 0z" fill="none" stroke="#24577d" stroke-width="1.1"/>
 <circle cx="1078.5" cy="96.1" r="1.9" fill="none" stroke="#24577d" stroke-width="1.1"/>
 <line x1="1092.7" y1="88.5" x2="1092.7" y2="111" stroke="#d4d4d4" stroke-width="1"/>
 <path d="M1100.5 92.5l2-2 3.5 2.5 3 3-1.2 1.2 11.2 11.2a1.6 1.6 0 0 1-2.2 2.2l-11.2-11.2-1.2 1.2-3-3z" fill="#fff" stroke="#9a9a9a" stroke-width="1.1" stroke-linejoin="round"/>
 <path d="M1107.6 102.2l-6.6 6.6a1.3 1.3 0 0 0 1.9 1.9l6.6-6.6" fill="none" stroke="#24577d" stroke-width="1.2"/>
 <path d="M1113.3 99.8a4.6 4.6 0 0 1-1.5-6.3a4.6 4.6 0 0 1 3.4-2.3l-1.2 2.6 1.8 2 2.6-1a4.6 4.6 0 0 1-3.6 4.9" fill="none" stroke="#24577d" stroke-width="1.2" stroke-linejoin="round"/>
</svg>
<!-- plan view content -->
<svg class="abs" style="left:716px;top:118px" width="426" height="170" viewBox="716 118 426 170">
 <defs><filter id="bl3" x="-20%" y="-20%" width="140%" height="140%"><feGaussianBlur stdDeviation="2.5"/></filter><filter id="noise" x="0" y="0" width="100%" height="100%"><feTurbulence type="fractalNoise" baseFrequency="0.25" numOctaves="2" seed="4"/><feColorMatrix type="matrix" values="0 0 0 0 0.05  0 0 0 0 0.08  0 0 0 0 0.04  0 0 0 -2.2 1.2"/></filter><clipPath id="pimg"><rect x="852" y="126" width="154" height="154"/></clipPath></defs>
 <text x="854" y="278" transform="rotate(-90 854 278)" font-family="Liberation Sans" font-size="11.5" fill="#8a1414">+444000</text>
 <text x="856" y="125" font-family="Liberation Sans" font-size="12" fill="#2aa02a">North (Y)</text>
 <g clip-path="url(#pimg)">
  <rect x="852" y="126" width="154" height="154" fill="#2a3a25"/>
  <g filter="url(#bl3)">
   <polygon points="852,140 876,150 886,200 892,280 852,280" fill="#56664e"/>
   <polygon points="852,126 892,126 882,150 852,142" fill="#1e2a1a"/>
   <path d="M887,132 C895,160 902,190 908,215 C914,240 922,262 934,284" stroke="#18231a" stroke-width="12" fill="none"/>
   <polygon points="904,150 914,160 930,190 948,222 968,250 990,284 950,284 936,256 922,226 910,195 902,170" fill="#56664c"/>
   <rect x="955" y="126" width="51" height="110" fill="#1f2d1b"/>
   <rect x="993" y="150" width="13" height="50" fill="#4e5e46"/>
   <rect x="972" y="240" width="34" height="40" fill="#3a4a34"/>
   <path d="M860,170 L872,220 M868,160 L884,240" stroke="#34442e" stroke-width="4" fill="none"/>
  </g>
  <rect x="852" y="126" width="154" height="154" filter="url(#noise)" opacity="0.35"/>
 </g>
 <line x1="851.5" y1="118" x2="851.5" y2="280" stroke="#1ee01e" stroke-width="1.5"/>
 <rect x="849" y="175" width="4" height="5" fill="#1ee01e"/><rect x="849" y="274" width="4" height="5" fill="#1ee01e"/>
 <line x1="851" y1="281" x2="1014" y2="281" stroke="#ff1010" stroke-width="1.6"/>
 <rect x="951" y="279" width="5" height="4" fill="#ff1010"/>
 <text x="1015" y="277" transform="rotate(-90 1015 277)" font-family="Liberation Sans" font-size="12" fill="#8a1414">East (X)</text>
 <text x="855" y="286" font-family="Liberation Sans" font-size="12" fill="#1a1a8a">Elev (Z)</text>
 <g fill="#000"><rect x="878" y="264" width="62" height="4"/><rect x="940" y="268" width="62" height="4"/><rect x="1002" y="264" width="62" height="4"/><rect x="1064" y="268" width="62" height="4"/></g>
 <g fill="#c8c8c8" opacity="0.8"><rect x="878" y="268" width="62" height="4"/><rect x="940" y="264" width="62" height="4"/></g>
 <g font-family="Liberation Sans" font-size="12" fill="#111"><text x="879" y="261">0</text><text x="925" y="261">1250</text><text x="988" y="261">2500</text><text x="1049" y="261">3750</text><text x="1097" y="261">5000</text></g>
</svg>
<!-- dropdown menu -->
<div class="abs" style="left:719px;top:113px;width:108px;height:62px;background:#fff;border:1px solid #d8d8d8;box-shadow:2px 2px 3px rgba(0,0,0,0.25)"></div>
<div class="abs" style="left:751px;top:122px;font-size:12.2px;color:#2a2a38"><u>P</u>lan View</div>
<div class="abs" style="left:751px;top:148px;font-size:12.2px;color:#2a2a38"><u>Z</u>oomed Out</div>
<!-- cursor -->
<svg class="abs" style="left:796px;top:103px" width="14" height="20" viewBox="0 0 14 20"><path d="M1 1L1 15L4.5 11.5L7 17.5L9.5 16.5L7 10.5L12 10.5Z" fill="#fff" stroke="#222" stroke-width="1"/></svg>
<!-- bottom splitter -->
<div class="abs" style="left:716px;top:289px;width:426px;height:6px;background:#f6f6f6"></div>
<div class="abs" style="left:918px;top:290px;width:22px;height:3px;background:repeating-linear-gradient(90deg,#9a9a9a 0 1px,transparent 1px 2px)"></div>
<!-- bottom right panel -->
<div class="abs" style="left:715px;top:295px;width:427px;height:205px;border:1px solid #c6c6c6;border-right:none;background:#fff"></div>
<div class="abs" style="left:716px;top:296px;width:426px;height:34px;background:#f8f8f8;border-bottom:1px solid #cdcdcd"></div>
<div class="sel" style="left:718px;top:299px;width:98px;height:26px"><span class="abs" style="left:5px;top:5px">Zoomed Out</span></div>
<svg class="abs" style="left:801px;top:309px" width="11" height="7"><polyline points="1,1 5.5,5.5 10,1" fill="none" stroke="#9a9a9a" stroke-width="1"/></svg>
<div class="sel" style="left:825px;top:299px;width:110px;height:26px"><span class="abs" style="left:5px;top:5px">Enclose Object</span></div>
<svg class="abs" style="left:918px;top:309px" width="11" height="7"><polyline points="1,1 5.5,5.5 10,1" fill="none" stroke="#9a9a9a" stroke-width="1"/></svg>
<div class="btn" style="left:945px;top:299px;width:86px;height:26px;line-height:24px">Visibility</div>
<svg class="abs" style="left:1039.5px;top:298px" width="100" height="28" viewBox="1026 86 100 28">
 <path d="M1044.5 89.5h8.8l-7.9 8.7-0.4 4.8-14 7 10.9-13.1z M1041.9 96.9l3.5 1.3" fill="none" stroke="#24577d" stroke-width="1.3" stroke-linejoin="round"/>
 <line x1="1031.3" y1="89.3" x2="1052.3" y2="110.3" stroke="#9a9a9a" stroke-width="1.5"/>
 <path d="M1064.3 96.4l7.3-7.2h14.1v14.1l-6.9 7.3h-14.5z" fill="#fff" stroke="#9a9a9a" stroke-width="1.3" stroke-linejoin="round"/>
 <rect x="1064.3" y="96.4" width="14.5" height="14.2" fill="#a8e0f0" stroke="#9a9a9a" stroke-width="1.3"/>
 <rect x="1068.4" y="100.5" width="6" height="5.5" fill="none" stroke="#9a9a9a" stroke-width="1"/>
 <line x1="1064.3" y1="110.6" x2="1071.6" y2="103.3" stroke="#9a9a9a" stroke-width="1"/>
 <rect x="1071.6" y="89.2" width="14.1" height="14.1" fill="#fff" stroke="#9a9a9a" stroke-width="1.3"/>
 <path d="M1073 96.1q5.5-5.5 11 0q-5.5 5.5-11 0z" fill="none" stroke="#24577d" stroke-width="1.1"/>
 <circle cx="1078.5" cy="96.1" r="1.9" fill="none" stroke="#24577d" stroke-width="1.1"/>
 <line x1="1092.7" y1="88.5" x2="1092.7" y2="111" stroke="#d4d4d4" stroke-width="1"/>
 <path d="M1100.5 92.5l2-2 3.5 2.5 3 3-1.2 1.2 11.2 11.2a1.6 1.6 0 0 1-2.2 2.2l-11.2-11.2-1.2 1.2-3-3z" fill="#fff" stroke="#9a9a9a" stroke-width="1.1" stroke-linejoin="round"/>
 <path d="M1107.6 102.2l-6.6 6.6a1.3 1.3 0 0 0 1.9 1.9l6.6-6.6" fill="none" stroke="#24577d" stroke-width="1.2"/>
 <path d="M1113.3 99.8a4.6 4.6 0 0 1-1.5-6.3a4.6 4.6 0 0 1 3.4-2.3l-1.2 2.6 1.8 2 2.6-1a4.6 4.6 0 0 1-3.6 4.9" fill="none" stroke="#24577d" stroke-width="1.2" stroke-linejoin="round"/>
</svg>
<svg class="abs" style="left:716px;top:330px" width="426" height="170" viewBox="716 330 426 170">
 <g font-family="Liberation Sans" font-size="12.5">
  <text x="988" y="421" transform="rotate(-90 988 421)" fill="#8a1414">445000</text>
  <text x="935" y="425" transform="rotate(-90 935 425)" fill="#8a1414">East (X)</text>
 </g>
 <polygon points="850,395 862,393 872,396 888,398 910.6,405 934.7,410 946.8,411 961,417 977,421.4 987,426.4 1007,422.4 1005,426.4 987,431.4 975,432.4 950.8,429.4 930.7,424.4 914.6,418.3 896.5,410.3 878.3,402.2 862.2,397.2" fill="#1c241a"/>
 <rect x="930.9" y="431.1" width="1.5" height="1.5" fill="#4a60c0"/><rect x="941.2" y="431.0" width="1.5" height="1.5" fill="#e0c090"/><rect x="911.9" y="424.7" width="1.5" height="1.5" fill="#c89060"/><rect x="931.8" y="434.7" width="1.5" height="1.5" fill="#b07048"/><rect x="922.9" y="434.0" width="1.5" height="1.5" fill="#d0a070"/><rect x="928.4" y="427.2" width="1.5" height="1.5" fill="#b07048"/><rect x="934.4" y="423.4" width="1.5" height="1.5" fill="#c89060"/><rect x="940.3" y="431.6" width="1.5" height="1.5" fill="#c89060"/><rect x="935.4" y="415.7" width="1.5" height="1.5" fill="#e0c090"/><rect x="930.8" y="416.9" width="1.5" height="1.5" fill="#b07048"/><rect x="942.1" y="414.1" width="1.5" height="1.5" fill="#c89060"/><rect x="941.7" y="417.8" width="1.5" height="1.5" fill="#c89060"/><rect x="920.3" y="436.1" width="1.5" height="1.5" fill="#e0c090"/><rect x="939.0" y="428.4" width="1.5" height="1.5" fill="#c89060"/><rect x="941.1" y="429.9" width="1.5" height="1.5" fill="#d0a070"/><rect x="920.6" y="422.3" width="1.5" height="1.5" fill="#c89060"/><rect x="940.9" y="420.1" width="1.5" height="1.5" fill="#8a5040"/><rect x="920.6" y="427.9" width="1.5" height="1.5" fill="#b07048"/><rect x="930.1" y="430.3" width="1.5" height="1.5" fill="#b07048"/><rect x="920.9" y="432.8" width="1.5" height="1.5" fill="#d0a070"/><rect x="933.3" y="418.2" width="1.5" height="1.5" fill="#d0a070"/><rect x="933.5" y="415.3" width="1.5" height="1.5" fill="#b07048"/><rect x="941.4" y="422.2" width="1.5" height="1.5" fill="#d0a070"/><rect x="911.6" y="432.1" width="1.5" height="1.5" fill="#8a5040"/><rect x="923.0" y="433.3" width="1.5" height="1.5" fill="#d0a070"/><rect x="912.5" y="418.2" width="1.5" height="1.5" fill="#c89060"/><rect x="914.8" y="419.7" width="1.5" height="1.5" fill="#d0a070"/><rect x="922.0" y="422.2" width="1.5" height="1.5" fill="#e0c090"/><rect x="919.0" y="424.6" width="1.5" height="1.5" fill="#e0c090"/><rect x="934.9" y="432.3" width="1.5" height="1.5" fill="#8a5040"/><rect x="912.2" y="435.8" width="1.5" height="1.5" fill="#b07048"/><rect x="917.7" y="425.8" width="1.5" height="1.5" fill="#8a5040"/><rect x="940.4" y="421.8" width="1.5" height="1.5" fill="#4a60c0"/><rect x="928.4" y="421.2" width="1.5" height="1.5" fill="#8a5040"/><rect x="920.8" y="432.4" width="1.5" height="1.5" fill="#4a60c0"/><rect x="915.8" y="429.9" width="1.5" height="1.5" fill="#d0a070"/><rect x="916.2" y="415.1" width="1.5" height="1.5" fill="#e0c090"/><rect x="928.1" y="423.3" width="1.5" height="1.5" fill="#c89060"/><rect x="934.7" y="421.9" width="1.5" height="1.5" fill="#8a5040"/><rect x="925.6" y="423.7" width="1.5" height="1.5" fill="#b07048"/><rect x="942.3" y="428.7" width="1.5" height="1.5" fill="#d0a070"/><rect x="921.7" y="418.8" width="1.5" height="1.5" fill="#4a60c0"/><rect x="929.0" y="417.1" width="1.5" height="1.5" fill="#d0a070"/><rect x="914.4" y="424.0" width="1.5" height="1.5" fill="#c89060"/><rect x="912.9" y="423.7" width="1.5" height="1.5" fill="#c89060"/><rect x="925.5" y="437.0" width="1.5" height="1.5" fill="#c89060"/><rect x="942.2" y="424.4" width="1.5" height="1.5" fill="#d0a070"/><rect x="933.0" y="421.3" width="1.5" height="1.5" fill="#8a5040"/><rect x="920.3" y="423.3" width="1.5" height="1.5" fill="#c89060"/><rect x="914.6" y="432.9" width="1.5" height="1.5" fill="#e0c090"/><rect x="941.7" y="428.4" width="1.5" height="1.5" fill="#d0a070"/><rect x="938.8" y="418.1" width="1.5" height="1.5" fill="#d0a070"/><rect x="919.7" y="432.0" width="1.5" height="1.5" fill="#e0c090"/><rect x="922.6" y="432.1" width="1.5" height="1.5" fill="#8a5040"/><rect x="933.2" y="429.3" width="1.5" height="1.5" fill="#8a5040"/><rect x="922.6" y="430.2" width="1.5" height="1.5" fill="#8a5040"/><rect x="937.7" y="420.1" width="1.5" height="1.5" fill="#4a60c0"/><rect x="933.9" y="436.0" width="1.5" height="1.5" fill="#8a5040"/><rect x="931.8" y="427.4" width="1.5" height="1.5" fill="#b07048"/><rect x="926.2" y="431.8" width="1.5" height="1.5" fill="#8a5040"/><rect x="932.5" y="424.6" width="1.5" height="1.5" fill="#e0c090"/><rect x="931.7" y="432.3" width="1.5" height="1.5" fill="#8a5040"/><rect x="919.8" y="421.9" width="1.5" height="1.5" fill="#d0a070"/><rect x="922.2" y="433.4" width="1.5" height="1.5" fill="#4a60c0"/><rect x="925.4" y="422.4" width="1.5" height="1.5" fill="#8a5040"/><rect x="927.6" y="426.2" width="1.5" height="1.5" fill="#c89060"/><rect x="917.4" y="422.3" width="1.5" height="1.5" fill="#d0a070"/><rect x="920.1" y="415.8" width="1.5" height="1.5" fill="#4a60c0"/><rect x="934.4" y="418.0" width="1.5" height="1.5" fill="#e0c090"/><rect x="927.5" y="435.5" width="1.5" height="1.5" fill="#8a5040"/><rect x="931.0" y="431.8" width="1.5" height="1.5" fill="#4a60c0"/><rect x="919.7" y="436.9" width="1.5" height="1.5" fill="#c89060"/><rect x="916.1" y="424.1" width="1.5" height="1.5" fill="#4a60c0"/><rect x="916.8" y="431.5" width="1.5" height="1.5" fill="#c89060"/><rect x="931.2" y="415.0" width="1.5" height="1.5" fill="#d0a070"/><rect x="942.4" y="417.8" width="1.5" height="1.5" fill="#c89060"/><rect x="914.5" y="436.3" width="1.5" height="1.5" fill="#d0a070"/><rect x="917.2" y="414.8" width="1.5" height="1.5" fill="#d0a070"/><rect x="922.2" y="429.2" width="1.5" height="1.5" fill="#b07048"/><rect x="929.9" y="419.5" width="1.5" height="1.5" fill="#8a5040"/><rect x="911.0" y="423.3" width="1.5" height="1.5" fill="#8a5040"/><rect x="938.4" y="433.9" width="1.5" height="1.5" fill="#4a60c0"/><rect x="937.6" y="422.6" width="1.5" height="1.5" fill="#b07048"/><rect x="928.6" y="420.9" width="1.5" height="1.5" fill="#8a5040"/><rect x="928.4" y="421.8" width="1.5" height="1.5" fill="#e0c090"/><rect x="920.4" y="422.1" width="1.5" height="1.5" fill="#c89060"/><rect x="924.4" y="432.7" width="1.5" height="1.5" fill="#4a60c0"/><rect x="928.2" y="424.8" width="1.5" height="1.5" fill="#c89060"/><rect x="930.1" y="427.0" width="1.5" height="1.5" fill="#c89060"/><rect x="942.0" y="428.0" width="1.5" height="1.5" fill="#8a5040"/>
 <line x1="932.7" y1="426.4" x2="1009.3" y2="437.5" stroke="#ff1010" stroke-width="1.2"/>
 <rect x="981.5" y="432" width="5" height="5" fill="#ff1010"/>
 <line x1="920.6" y1="446.9" x2="1009.3" y2="437.5" stroke="#1ee01e" stroke-width="1.2"/>
 <rect x="950.5" y="441" width="5" height="5" fill="#1ee01e"/><rect x="1005.5" y="435" width="5" height="5" fill="#1ee01e"/>
 <line x1="1010.3" y1="386" x2="1010.3" y2="437.5" stroke="#1a1aff" stroke-width="1.2"/>
 <g font-family="Liberation Sans" font-size="12.5">
  <text x="1014" y="392" fill="#1a1a8a">Elev (Z)</text>
  <text x="957" y="441" transform="rotate(-90 957 441)" fill="#1a9a1a">+494000</text>
  <text x="1011" y="433" transform="rotate(-90 1011 433)" fill="#1a9a1a">+492000</text>
  <text x="921" y="444" transform="rotate(-90 921 444)" fill="#1a9a1a">North (Y)</text>
 </g>
 <g fill="#000"><rect x="849" y="475" width="92" height="4"/><rect x="941" y="479" width="93" height="4"/><rect x="1034" y="475" width="92" height="4"/></g>
 <g font-family="Liberation Sans" font-size="12" fill="#111"><text x="849" y="472">0</text><text x="926" y="472">2500</text><text x="1019" y="472">5000</text><text x="1097" y="472">7500</text></g>
</svg>

</body></html>
